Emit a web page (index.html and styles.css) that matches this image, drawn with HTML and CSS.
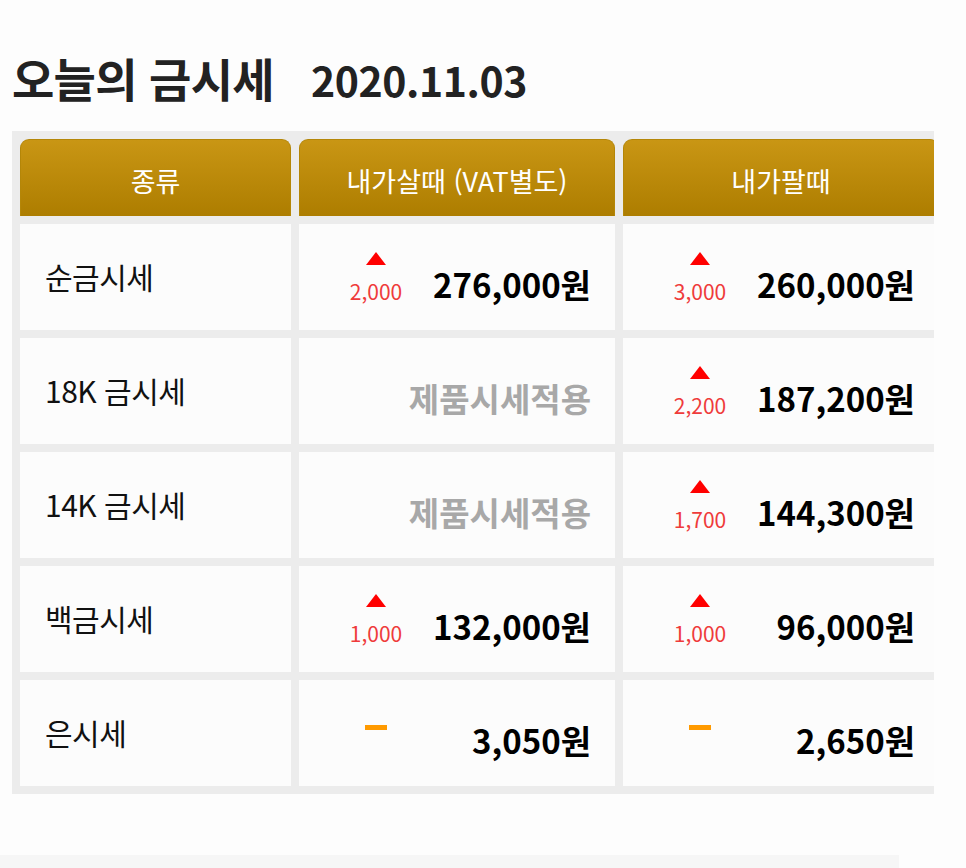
FILE: index.html
```html
<!DOCTYPE html>
<html lang="ko">
<head>
<meta charset="utf-8">
<title>오늘의 금시세</title>
<link rel="stylesheet" href="styles.css">
</head>
<body>
<h1 class="title"><span class="title-main">오늘의 금시세</span><span class="title-date">2020.11.03</span></h1>
<div class="board">
  <div class="grid">
    <div class="head">종류</div>
    <div class="head">내가살때 (VAT별도)</div>
    <div class="head">내가팔때</div>

    <div class="cell name">순금시세</div>
    <div class="cell val"><span class="chg"><i class="up"></i>2,000</span><span class="price">276,000원</span></div>
    <div class="cell val"><span class="chg"><i class="up"></i>3,000</span><span class="price">260,000원</span></div>

    <div class="cell name">18K 금시세</div>
    <div class="cell val"><span class="na">제품시세적용</span></div>
    <div class="cell val"><span class="chg"><i class="up"></i>2,200</span><span class="price">187,200원</span></div>

    <div class="cell name">14K 금시세</div>
    <div class="cell val"><span class="na">제품시세적용</span></div>
    <div class="cell val"><span class="chg"><i class="up"></i>1,700</span><span class="price">144,300원</span></div>

    <div class="cell name">백금시세</div>
    <div class="cell val"><span class="chg"><i class="up"></i>1,000</span><span class="price">132,000원</span></div>
    <div class="cell val"><span class="chg"><i class="up"></i>1,000</span><span class="price">96,000원</span></div>

    <div class="cell name">은시세</div>
    <div class="cell val"><span class="chg"><i class="flat"></i></span><span class="price">3,050원</span></div>
    <div class="cell val"><span class="chg"><i class="flat"></i></span><span class="price">2,650원</span></div>
  </div>
</div>
<div class="footer-bar"></div>
</body>
</html>
```

FILE: styles.css
```css
* { box-sizing: border-box; }
html, body { margin: 0; padding: 0; background: #fdfdfd; }
body {
  width: 966px;
  height: 868px;
  overflow: hidden;
  font-family: "Noto Sans CJK KR", "Noto Sans", sans-serif;
  color: #111;
}
.title {
  margin: 0;
  padding: 49px 0 0 12px;
  height: 131px;
  line-height: 56px;
  font-weight: 700;
  color: #222;
}
.title-main { font-size: 46px; letter-spacing: -0.7px; }
.title-date { font-size: 41px; margin-left: 37px; letter-spacing: -0.4px; }
.board {
  margin-left: 12px;
  width: 922px;
  background: #ececec;
  padding: 8px 0 8px 8px;
  overflow: hidden;
}
.grid {
  display: grid;
  grid-template-columns: 271px 316px 316px;
  grid-template-rows: 77px repeat(5, 106px);
  gap: 8px;
  width: 927px;
}
.head {
  border-radius: 9px 9px 0 0;
  background: linear-gradient(#c99614, #ad7d00);
  border: 1px solid #b48608;
  border-bottom: none;
  color: #fff;
  font-size: 27px;
  display: flex;
  align-items: center;
  justify-content: center;
  padding-top: 5px;
}
.cell { background: #fcfcfc; }
.name {
  display: flex;
  align-items: center;
  padding-left: 25px;
  font-size: 30px;
  letter-spacing: -0.5px;
  color: #111;
  padding-bottom: 2px;
}
.val {
  display: flex;
  align-items: flex-start;
  padding: 28px 24px 0 47px;
  white-space: nowrap;
}
.chg {
  display: block;
  width: 60px;
  flex: none;
  text-align: center;
  font-size: 21px;
  line-height: 26px;
  color: #ef3b3b;
}
.chg i { display: block; margin: 0 auto 13px; }
.up {
  width: 0; height: 0;
  border-left: 10px solid transparent;
  border-right: 10px solid transparent;
  border-bottom: 13px solid #ff0000;
}
.chg i.flat {
  width: 22px;
  height: 5px;
  background: #ff9a00;
  margin-top: 17px;
}
.price, .na {
  flex: 1;
  text-align: right;
  margin-top: 12px;
  line-height: 40px;
  font-weight: 700;
}
.price {
  font-size: 33px;
  color: #000;
}
.na {
  font-size: 33px;
  color: #a8a8a8;
}
.footer-bar {
  margin-top: 61px;
  width: 899px;
  height: 20px;
  background: #f6f6f6;
}
```
